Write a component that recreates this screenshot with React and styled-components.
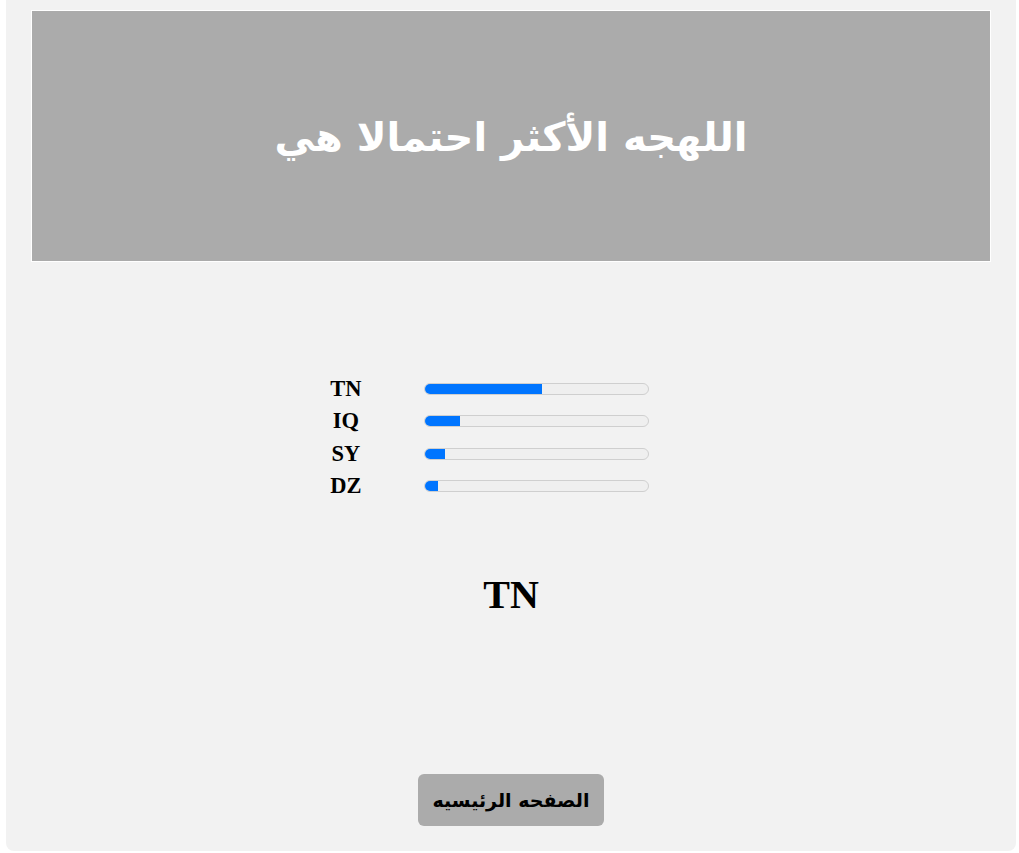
import { Fragment } from "react"
import styled, { createGlobalStyle } from "styled-components"

const GlobalStyle = createGlobalStyle`
  body {
    margin: 0;
    background: #ffffff;
    font-family: "DejaVu Sans", sans-serif;
  }
`

const Page = styled.div`
  padding-left: 6px;
  width: 1010px;
`

const Card = styled.div`
  background: #f2f2f2;
  min-height: 851px;
  border-radius: 0 0 8px 8px;
  padding: 10px 25px 0;
  box-sizing: border-box;
  display: flex;
  flex-direction: column;
  align-items: center;
`

const Header = styled.div`
  width: 100%;
  height: 252px;
  box-sizing: border-box;
  border: 1px solid #ffffff;
  background: #ababab;
  display: flex;
  align-items: center;
  justify-content: center;

  h1 {
    margin: 0;
    color: #ffffff;
    font-family: "DejaVu Sans", sans-serif;
    font-size: 40px;
    font-weight: bold;
    direction: rtl;
    padding-top: 2px;
  }
`

const Chart = styled.div`
  margin-top: 111px;
  margin-right: 67px;
  display: grid;
  grid-template-columns: 80px 225px;
  column-gap: 38px;
  grid-auto-rows: 32.3px;
  align-items: center;
`

const Label = styled.div`
  font-family: "Liberation Serif", serif;
  font-weight: bold;
  font-size: 22.5px;
  text-align: center;
  color: #000;
`

const Track = styled.div`
  height: 10px;
  border: 1px solid #cfcfcf;
  border-radius: 6px;
  background: #efefef;
  overflow: hidden;
`

const Fill = styled.div`
  height: 100%;
  background: #0075ff;
`

const Result = styled.div`
  margin-top: 70px;
  font-family: "Liberation Serif", serif;
  font-weight: bold;
  font-size: 40px;
  line-height: 46px;
  color: #000;
`

const HomeButton = styled.button`
  margin-top: auto;
  margin-bottom: 25px;
  width: 186px;
  height: 52px;
  border: none;
  border-radius: 6px;
  background: #ababab;
  color: #000;
  font-family: "DejaVu Sans", sans-serif;
  font-weight: bold;
  font-size: 19px;
  direction: rtl;
  cursor: pointer;
`

const scores = [
  { code: "TN", value: 52.5 },
  { code: "IQ", value: 15.5 },
  { code: "SY", value: 9 },
  { code: "DZ", value: 6 },
]

function App() {
  return (
    <>
      <GlobalStyle />
      <Page>
        <Card>
          <Header>
            <h1>اللهجه الأكثر احتمالا هي</h1>
          </Header>
          <Chart>
            {scores.map((s) => (
              <Fragment key={s.code}>
                <Label>{s.code}</Label>
                <Track>
                  <Fill style={{ width: `${s.value}%` }} />
                </Track>
              </Fragment>
            ))}
          </Chart>
          <Result>TN</Result>
          <HomeButton>الصفحه الرئيسيه</HomeButton>
        </Card>
      </Page>
    </>
  )
}

export default App
